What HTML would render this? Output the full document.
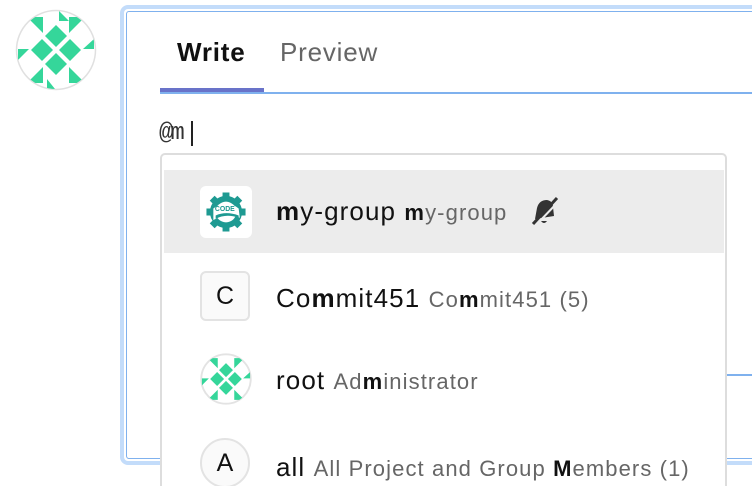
<!DOCTYPE html><html><head><style>
html,body{margin:0;width:752px;height:486px;overflow:hidden;background:#fff;font-family:"Liberation Sans",sans-serif;position:relative}
.abs{position:absolute}
.row{position:absolute;left:164px;width:560px;height:83px}
.ic{position:absolute;left:36px;width:50px;height:50px;box-sizing:border-box;border:2px solid #e3e3e3;background:#fafafa;font-size:25px;color:#111;display:flex;align-items:center;justify-content:center}
.t{position:absolute;left:112px;font-size:26px;letter-spacing:1.1px;color:#111;white-space:nowrap}
.t span{font-size:22px;letter-spacing:1.1px;color:#666}
.t b{color:#111}
</style></head><body>
<svg class="abs" style="left:15px;top:9px" width="82" height="82" viewBox="0 0 82 82">
<defs><clipPath id="c"><circle cx="41" cy="41" r="39"/></clipPath></defs>
<circle cx="41" cy="41" r="39.5" fill="#fff" stroke="#e0e0e0" stroke-width="1.5"/>
<g clip-path="url(#c)" fill="#35d69a">
<polygon points="41,16 52,27 41,38 30,27"/><polygon points="41,44 52,55 41,66 30,55"/>
<polygon points="27,30 38,41 27,52 16,41"/><polygon points="55,30 66,41 55,52 44,41"/>
<polygon points="12,8 28,8 28,24"/><polygon points="54,8 70,8 54,24"/>
<polygon points="12,74 28,58 28,74"/><polygon points="54,58 70,74 54,74"/>
<polygon points="3,40 14,40 3,51"/><polygon points="79,30 68,40 79,40"/>
<polygon points="44,2 54,12 44,12"/><polygon points="32,70 40,80 32,80"/>
</g></svg>
<div class="abs" style="left:120px;top:5px;width:660px;height:460px;box-sizing:border-box;border:4px solid #c3dcfa;border-radius:8px"></div>
<div class="abs" style="left:126px;top:11px;width:660px;height:448px;box-sizing:border-box;border:1.5px solid #7fb1ee;border-radius:3px"></div>
<div class="abs" style="left:160px;top:92px;width:600px;height:1.5px;background:#7fb1ee"></div>
<div class="abs" style="left:160px;top:88px;width:104px;height:4px;background:#6973c9"></div>
<div class="abs" style="left:177px;top:37px;font-size:26px;letter-spacing:0.8px;font-weight:bold;color:#111">Write</div>
<div class="abs" style="left:280px;top:37px;font-size:26px;letter-spacing:0.8px;color:#666">Preview</div>
<div class="abs" style="left:159px;top:120px;font-size:24px;color:#333;font-family:'Liberation Mono',monospace;letter-spacing:-3px">@m</div>
<div class="abs" style="left:191px;top:121px;width:2px;height:25px;background:#222"></div>
<div class="abs" style="left:727px;top:374px;width:30px;height:2px;background:#7fb1ee"></div>
<div class="abs" style="left:160px;top:153px;width:567px;height:333px;overflow:hidden">
<div class="abs" style="left:0;top:0;width:567px;height:400px;box-sizing:border-box;border:2px solid #ddd;border-radius:5px;background:#fff"></div>
</div>
<div class="row" style="top:170px;background:#ececec">
<div class="ic" style="top:16px;border:none;background:#fff;border-radius:6px;width:52px;height:52px;left:36px">
<svg width="46" height="46" viewBox="0 0 40 40"><g fill="#1e9a92"><circle cx="20" cy="20" r="14"/><g stroke="#1e9a92" stroke-width="6"><line x1="20" y1="3" x2="20" y2="37"/><line x1="3" y1="20" x2="37" y2="20"/><line x1="8" y1="8" x2="32" y2="32"/><line x1="32" y1="8" x2="8" y2="32"/></g></g><circle cx="20" cy="20" r="9" fill="#fff"/><path d="M9 17 Q20 8 31 17 L32 25 Q20 21 9 27Z" fill="#fff"/><path d="M11 23 Q20 19 31 23 L31 25 Q20 21 11 26Z" fill="#1e9a92"/><text x="19" y="19" font-size="6" font-weight="bold" fill="#1e9a92" text-anchor="middle" font-family="Liberation Sans">CODE</text></svg></div>
<div class="t" style="top:26px"><b>m</b>y-group <span><b>m</b>y-group</span></div>
<svg class="abs" style="left:366px;top:26px" width="30" height="30" viewBox="0 0 28 30"><path d="M4 23 L6 12 Q8 4 16 4 Q22 5 22 11 L23 20 Z" fill="#333"/><path d="M10 25 Q13 29 16 25" fill="#333"/><line x1="2" y1="28" x2="26" y2="2" stroke="#333" stroke-width="3"/><line x1="6" y1="28" x2="28" y2="5" stroke="#ececec" stroke-width="2"/></svg>
</div>
<div class="row" style="top:257px"><div class="ic" style="top:14px;border-radius:6px">C</div><div class="t" style="top:26px">Co<b>m</b>mit451 <span>Co<b>m</b>mit451 (5)</span></div></div>
<div class="row" style="top:339px">
<svg class="abs" style="left:36px;top:14px" width="52" height="52" viewBox="0 0 82 82"><defs><clipPath id="c2"><circle cx="41" cy="41" r="39"/></clipPath></defs><circle cx="41" cy="41" r="39" fill="#fff" stroke="#e3e3e3" stroke-width="3"/><g clip-path="url(#c2)" fill="#35d69a"><polygon points="41,16 52,27 41,38 30,27"/><polygon points="41,44 52,55 41,66 30,55"/><polygon points="27,30 38,41 27,52 16,41"/><polygon points="55,30 66,41 55,52 44,41"/><polygon points="12,8 28,8 28,24"/><polygon points="54,8 70,8 54,24"/><polygon points="12,74 28,58 28,74"/><polygon points="54,58 70,74 54,74"/><polygon points="3,40 14,40 3,51"/><polygon points="79,30 68,40 79,40"/></g></svg>
<div class="t" style="top:26px">root <span>Ad<b>m</b>inistrator</span></div></div>
<div class="row" style="top:422px;height:64px;overflow:hidden"><div class="ic" style="top:16px;border-radius:50%">A</div><div class="t" style="top:30px">all <span>All Project and Group <b>M</b>embers (1)</span></div></div>
</body></html>
